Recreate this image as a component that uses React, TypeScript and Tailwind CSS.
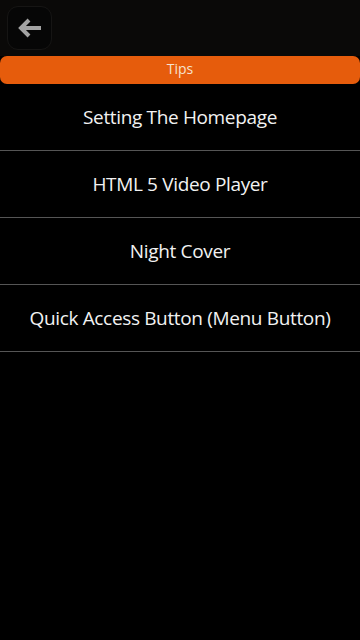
import React from "react";

const items = [
  "Setting The Homepage",
  "HTML 5 Video Player",
  "Night Cover",
  "Quick Access Button (Menu Button)",
];

export default function App() {
  return (
    <div
      className="w-[360px] h-[640px] bg-black text-white flex flex-col"
      style={{ fontFamily: '"Open Sans", "Noto Sans", sans-serif' }}
    >
      <div className="h-[56px] bg-[#0a0908] flex items-start px-[7px] pt-[6px]">
        <div className="w-[45px] h-[44px] rounded-[11px] border border-[#161514] bg-[#060606] flex items-center justify-center">
          <svg width="26" height="22" viewBox="0 0 26 22">
            <path
              d="M24 11 H4 M12 3 L4 11 L12 19"
              fill="none"
              stroke="#a3a3a3"
              strokeWidth="4"
              strokeLinecap="butt"
              strokeLinejoin="miter"
            />
          </svg>
        </div>
      </div>
      <div className="h-[28px] bg-[#e65c0c] rounded-[7px] flex items-center justify-center text-[14px] text-[#f6e2cf] pb-[4px]">
        Tips
      </div>
      <div className="flex flex-col">
        {items.map((t) => (
          <div
            key={t}
            className="h-[67px] border-b border-[#555555] flex items-center justify-center text-[19px] text-[#f2f2f2] tracking-[-0.35px]"
          >
            {t}
          </div>
        ))}
      </div>
    </div>
  );
}
